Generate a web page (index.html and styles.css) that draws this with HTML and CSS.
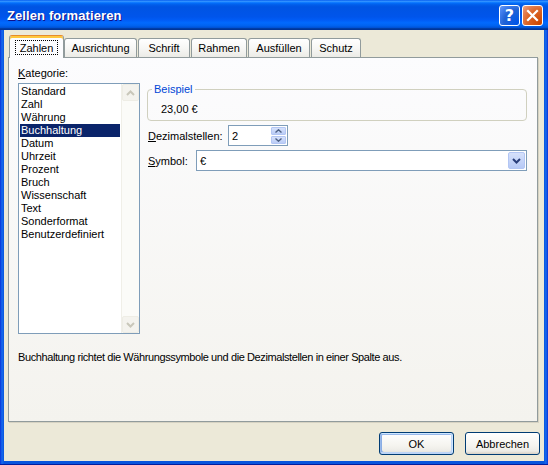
FILE: index.html
```html
<!DOCTYPE html>
<html lang="de">
<head>
<meta charset="utf-8">
<title>Zellen formatieren</title>
<link rel="stylesheet" href="styles.css">
</head>
<body>
<div class="window">
  <div class="titlebar">
    <span class="title">Zellen formatieren</span>
    <div class="tb-buttons">
      <span class="tb-btn help">?</span>
      <span class="tb-btn close">
        <svg width="13" height="13" viewBox="0 0 13 13"><path d="M2 2 L11 11 M11 2 L2 11" stroke="#fff" stroke-width="2.2" stroke-linecap="square"/></svg>
      </span>
    </div>
  </div>
  <div class="client">
    <div class="tabs">
      <div class="tab active t-zahlen"><span class="focus">Zahlen</span></div>
      <div class="tab t-ausr">Ausrichtung</div>
      <div class="tab t-schrift">Schrift</div>
      <div class="tab t-rahmen">Rahmen</div>
      <div class="tab t-ausf">Ausfüllen</div>
      <div class="tab t-schutz">Schutz</div>
    </div>
    <div class="panel">
      <div class="panel-top">
        <div class="cat-col">
          <div class="label"><u>K</u>ategorie:</div>
          <div class="listbox">
            <ul class="items">
              <li>Standard</li>
              <li>Zahl</li>
              <li>Währung</li>
              <li class="selected">Buchhaltung</li>
              <li>Datum</li>
              <li>Uhrzeit</li>
              <li>Prozent</li>
              <li>Bruch</li>
              <li>Wissenschaft</li>
              <li>Text</li>
              <li>Sonderformat</li>
              <li>Benutzerdefiniert</li>
            </ul>
            <div class="vscroll">
              <span class="sb-btn"><svg width="9" height="6" viewBox="0 0 9 6"><path d="M1 5 L4.5 1.5 L8 5" fill="none" stroke="#C9C7BA" stroke-width="2"/></svg></span>
              <span class="sb-track"></span>
              <span class="sb-btn"><svg width="9" height="6" viewBox="0 0 9 6"><path d="M1 1 L4.5 4.5 L8 1" fill="none" stroke="#C9C7BA" stroke-width="2"/></svg></span>
            </div>
          </div>
        </div>
        <div class="opts-col">
          <fieldset class="sample">
            <legend>Beispiel</legend>
            <div class="sample-value">23,00 €</div>
          </fieldset>
          <div class="row">
            <span class="row-label dez"><u>D</u>ezimalstellen:</span>
            <div class="spin">
              <span class="field-text">2</span>
              <div class="spin-btns">
                <span class="spin-btn"><svg width="7" height="4" viewBox="0 0 7 4"><path d="M0.5 3.5 L3.5 0.8 L6.5 3.5" fill="none" stroke="#4D6185" stroke-width="1.4"/></svg></span>
                <span class="spin-btn"><svg width="7" height="4" viewBox="0 0 7 4"><path d="M0.5 0.5 L3.5 3.2 L6.5 0.5" fill="none" stroke="#4D6185" stroke-width="1.4"/></svg></span>
              </div>
            </div>
          </div>
          <div class="row">
            <span class="row-label sym"><u>S</u>ymbol:</span>
            <div class="combo">
              <span class="field-text">€</span>
              <span class="combo-btn"><svg width="9" height="6" viewBox="0 0 9 6"><path d="M1 1 L4.5 4.5 L8 1" fill="none" stroke="#283D7A" stroke-width="2"/></svg></span>
            </div>
          </div>
        </div>
      </div>
      <p class="desc">Buchhaltung richtet die Währungssymbole und die Dezimalstellen in einer Spalte aus.</p>
    </div>
    <div class="buttons">
      <button class="btn default">OK</button>
      <button class="btn">Abbrechen</button>
    </div>
  </div>
</div>
</body>
</html>
```
FILE: styles.css
```css
html, body {
  margin: 0;
  padding: 0;
  background: #ffffff;
}
body {
  font-family: "Liberation Sans", Arial, sans-serif;
  font-size: 11px;
  color: #000;
}
.window {
  width: 548px;
  height: 465px;
  box-sizing: border-box;
  display: flex;
  flex-direction: column;
  background: linear-gradient(90deg, #0831D9 0, #166AEE 2px, #0855DD 4px, #0855DD 544px, #166AEE 546px, #0831D9 548px);
  border-bottom: 1px solid #001EA0;
}
.titlebar {
  height: 30px;
  flex: none;
  display: flex;
  align-items: center;
  justify-content: space-between;
  padding: 0 5px 0 7px;
  background: linear-gradient(180deg, #0058EE 0%, #3593FF 4%, #288EFF 6%, #127DFF 8%, #036FFC 10%, #0262EE 14%, #0057E5 20%, #0054E3 24%, #0055EB 56%, #005BF5 66%, #026AFE 76%, #0062EF 86%, #0052D6 92%, #0040AB 94%, #003092 100%);
}
.title {
  color: #fff;
  font-weight: bold;
  font-size: 13px;
  letter-spacing: 0.1px;
  text-shadow: 1px 1px 0 #0F1089;
  margin-top: 1px;
}
.tb-buttons {
  display: flex;
  gap: 2px;
}
.tb-btn {
  width: 21px;
  height: 21px;
  box-sizing: border-box;
  border: 1px solid #fff;
  border-radius: 3px;
  display: flex;
  align-items: center;
  justify-content: center;
  color: #fff;
}
.help {
  background: radial-gradient(circle at 90% 90%, #0054E9 0%, #2263D5 55%, #4480EE 80%, #6A9AF5 100%);
  font-family: "DejaVu Sans", sans-serif;
  font-weight: bold;
  font-size: 16px;
  line-height: 19px;
}
.close {
  background: radial-gradient(circle at 90% 90%, #CC4600 0%, #DC6527 55%, #E4835A 80%, #F0A786 100%);
}
.client {
  flex: 1;
  margin: 0 4px 3px 4px;
  background: #ECE9D8;
  padding: 5px 4px 6px 4px;
  display: flex;
  flex-direction: column;
}
.tabs {
  height: 22px;
  display: flex;
  align-items: flex-end;
  padding-left: 1px;
}
.tab {
  height: 19px;
  box-sizing: border-box;
  padding-top: 3px;
  margin-right: 1px;
  border: 1px solid #919B9C;
  border-bottom: none;
  border-radius: 3px 3px 0 0;
  background: linear-gradient(180deg, #FFFFFF 0%, #F7F7F5 50%, #ECEBE6 100%);
  white-space: nowrap;
  text-align: center;
}
.t-zahlen { width: 55px; }
.t-ausr { width: 73px; }
.t-schrift { width: 52px; }
.t-rahmen { width: 56px; }
.t-ausf { width: 62px; }
.t-schutz { width: 50px; }
.tab.active {
  height: 23px;
  margin-bottom: -1px;
  margin-right: 0;
  padding-top: 4px;
  position: relative;
  z-index: 1;
  background: #FCFCFE;
  border-top: 1px solid #E68B2C;
  box-shadow: inset 0 2px 0 #FFC83C;
}
.focus {
  display: inline-block;
  border: 1px dotted #000;
  padding: 1px 4px 0 4px;
  line-height: 12px;
}
.panel {
  flex: 1;
  margin-right: 2px;
  border: 1px solid #919B9C;
  box-shadow: 1px 1px 0 #D6D2C2;
  background: linear-gradient(180deg, #FCFCFE 0%, #F4F3EE 100%);
  padding: 9px 10px 0 9px;
  display: flex;
  flex-direction: column;
}
.panel-top {
  display: flex;
}
.cat-col {
  width: 122px;
  flex: none;
}
.label {
  line-height: 13px;
  margin-bottom: 3px;
}
.listbox {
  height: 251px;
  box-sizing: border-box;
  border: 1px solid #7F9DB9;
  background: #fff;
  display: flex;
}
.items {
  flex: 1;
  list-style: none;
  margin: 0;
  padding: 1px 1px 0 1px;
}
.items li {
  line-height: 13px;
  height: 13px;
  padding-left: 1px;
  white-space: nowrap;
}
.items li.selected {
  background: #0A246A;
  color: #fff;
}
.vscroll {
  width: 17px;
  display: flex;
  flex-direction: column;
  background: #FBFBF8;
  border-left: 1px solid #F0EFE8;
}
.sb-btn {
  height: 17px;
  box-sizing: border-box;
  border: 1px solid #EEEDE5;
  border-radius: 2px;
  background: #F4F3EE;
  display: flex;
  align-items: center;
  justify-content: center;
}
.sb-track {
  flex: 1;
}
.opts-col {
  flex: 1;
  margin-left: 7px;
  margin-top: 16px;
}
.sample {
  margin: 0;
  padding: 7px 0 3px 13px;
  border: 1px solid #D0D0BF;
  border-radius: 4px;
  height: 38px;
  box-sizing: border-box;
}
.sample legend {
  color: #0046D5;
  padding: 0 2px;
  margin-left: -9px;
  line-height: 13px;
}
.sample-value {
  line-height: 13px;
}
.row {
  display: flex;
  align-items: center;
  height: 21px;
  margin-top: 4px;
  padding-left: 1px;
}
.row-label.dez {
  width: 80px;
}
.row-label.sym {
  width: 48px;
}
.spin, .combo {
  height: 21px;
  box-sizing: border-box;
  border: 1px solid #7F9DB9;
  background: #fff;
  display: flex;
  align-items: center;
}
.spin {
  width: 60px;
}
.combo {
  flex: 1;
}
.field-text {
  flex: 1;
  padding-left: 3px;
}
.spin-btns {
  width: 15px;
  height: 17px;
  margin-right: 1px;
  display: flex;
  flex-direction: column;
  gap: 1px;
}
.spin-btn {
  flex: 1;
  background: linear-gradient(180deg, #D6E1FB 0%, #BACCF6 100%);
  border: 1px solid #B3C6F4;
  border-radius: 1px;
  display: flex;
  align-items: center;
  justify-content: center;
}
.combo-btn {
  width: 17px;
  height: 17px;
  box-sizing: border-box;
  margin-right: 1px;
  background: linear-gradient(180deg, #D6E1FB 0%, #B6C9F6 100%);
  border: 1px solid #B3C6F4;
  border-radius: 2px;
  display: flex;
  align-items: center;
  justify-content: center;
}
.desc {
  margin: 17px 0 0 0;
  line-height: 13px;
  letter-spacing: -0.4px;
}
.buttons {
  display: flex;
  justify-content: flex-end;
  gap: 11px;
  margin-top: 10px;
}
.btn {
  width: 75px;
  height: 23px;
  box-sizing: border-box;
  font-family: "Liberation Sans", Arial, sans-serif;
  font-size: 11px;
  color: #000;
  border: 1px solid #003C74;
  border-radius: 3px;
  background: linear-gradient(180deg, #FFFFFF 0%, #F5F4EF 60%, #ECEBE6 86%, #D6D0C5 100%);
  padding: 0;
}
.btn.default {
  box-shadow: inset -1px 1px #CEE7FF, inset 1px 2px #98B8EA, inset -2px -2px #BCD4F6, inset 1px 1px #89ADE4, inset 2px -2px #89ADE4;
}
```
